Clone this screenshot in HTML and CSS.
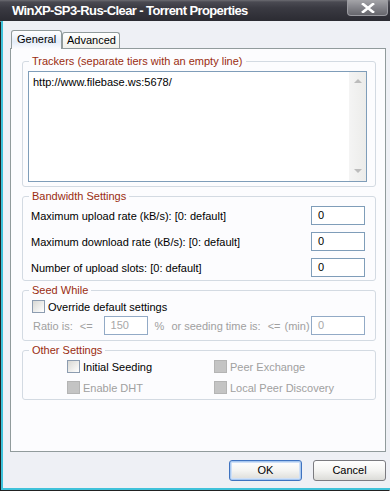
FILE: index.html
```html
<!DOCTYPE html>
<html>
<head>
<meta charset="utf-8">
<link rel="stylesheet" href="styles.css">
</head>
<body>
<div class="frame">
  <div class="titlebar">
    <span class="title">WinXP-SP3-Rus-Clear - Torrent Properties</span>
    <div class="close">
      <svg width="16" height="10" viewBox="0 0 16 10"><path d="M3 1 L13 9 M13 1 L3 9" stroke="#fff" stroke-width="2.6" stroke-linecap="square"/></svg>
    </div>
  </div>
  <div class="body">
    <div class="tabs">
      <div class="tab active">General</div>
      <div class="tab">Advanced</div>
    </div>
    <div class="panel">
      <fieldset class="group">
        <legend>Trackers (separate tiers with an empty line)</legend>
        <div class="trackers">
          <div class="tracker-box">
            <div class="tracker-text">http://www.filebase.ws:5678/</div>
            <div class="vscroll"><span class="arr up"></span><span class="arr down"></span></div>
          </div>
        </div>
      </fieldset>
      <fieldset class="group spaced">
        <legend>Bandwidth Settings</legend>
        <div class="bandwidth">
          <div class="brow"><span>Maximum upload rate (kB/s): [0: default]</span><div class="field">0</div></div>
          <div class="brow"><span>Maximum download rate (kB/s): [0: default]</span><div class="field">0</div></div>
          <div class="brow"><span>Number of upload slots: [0: default]</span><div class="field">0</div></div>
        </div>
      </fieldset>
      <fieldset class="group spaced">
        <legend>Seed While</legend>
        <div class="seed">
          <div class="check-row"><span class="cb"></span><span>Override default settings</span></div>
          <div class="ratio-row">
            <span>Ratio is:</span><span class="le">&lt;=</span>
            <div class="field dis small">150</div>
            <span class="pct">%</span>
            <span class="or">or seeding time is:</span><span class="le2">&lt;=</span><span class="min">(min)</span>
            <div class="field dis last">0</div>
          </div>
        </div>
      </fieldset>
      <fieldset class="group spaced">
        <legend>Other Settings</legend>
        <div class="other">
          <div class="check-row"><span class="cb"></span><span>Initial Seeding</span></div>
          <div class="check-row off"><span class="cb dis"></span><span>Peer Exchange</span></div>
          <div class="check-row off"><span class="cb dis"></span><span>Enable DHT</span></div>
          <div class="check-row off"><span class="cb dis"></span><span>Local Peer Discovery</span></div>
        </div>
      </fieldset>
    </div>
    <div class="buttons">
      <div class="btn default">OK</div>
      <div class="btn">Cancel</div>
    </div>
  </div>
</div>
</body>
</html>
```
FILE: styles.css
```css
* { box-sizing: border-box; }
html, body { margin: 0; padding: 0; }
body {
  width: 390px;
  height: 491px;
  overflow: hidden;
  background: #8a8a8a;
  font-family: "Liberation Sans", Arial, sans-serif;
  font-size: 11px;
  color: #000;
}
.frame {
  width: 390px;
  height: 491px;
  display: flex;
  flex-direction: column;
}
.titlebar {
  height: 21px;
  flex: none;
  display: flex;
  align-items: flex-start;
  background: linear-gradient(#6c6c72 0, #4a4a52 2px, #3a3a42 8px, #2b2b32 100%);
  padding-left: 12px;
  padding-right: 2px;
}
.title {
  color: #fff;
  font-weight: bold;
  font-size: 13px;
  letter-spacing: -0.6px;
  line-height: 16px;
  padding-top: 3px;
}
.close {
  margin-left: auto;
  width: 41px;
  height: 16px;
  border: 1px solid #9a9aa0;
  border-top: none;
  border-radius: 0 0 4px 4px;
  background: linear-gradient(#a4a4a8 0, #8a8a90 40%, #66666c 100%);
  display: flex;
  align-items: center;
  justify-content: center;
}
.close svg { display: block; }
.body {
  flex: 1;
  margin-left: 1px;
  margin-bottom: 1px;
  border-left: 2px solid #3fc2da;
  border-bottom: 2px solid #3fc2da;
  box-shadow: -1px 1px 0 #222;
  background: #eef0f5;
  display: flex;
  flex-direction: column;
  padding-top: 9px;
}
.tabs {
  height: 18px;
  display: flex;
  align-items: flex-end;
  padding-left: 8px;
  position: relative;
  z-index: 2;
}
.tab {
  height: 16px;
  line-height: 15px;
  padding: 0 4px;
  width: 58px;
  border: 1px solid #919b9c;
  border-bottom: none;
  border-radius: 3px 3px 0 0;
  background: linear-gradient(#ffffff, #f0f0ea);
  color: #000;
  font-size: 11px;
  white-space: nowrap;
}
.tab.active {
  width: 51px;
  height: 19px;
  margin-bottom: -1px;
  padding-left: 5px;
  line-height: 17px;
  background: linear-gradient(#ffffff 0, #e3ecf8 60%, #fcfcfe 100%);
}
.panel {
  height: 404px;
  margin-left: 7px;
  margin-right: 4px;
  border: 1px solid #919b9c;
  background: #fcfcfe;
  padding: 6px 9px 0 11px;
}
.group {
  margin: 0;
  padding: 0;
  min-width: 0;
  border: 1px solid #d3dae2;
  border-radius: 3px;
}
.group.spaced { margin-top: 3px; }
.group legend {
  padding: 0 3px;
  margin-left: 6px;
  line-height: 13px;
  font-size: 11px;
  color: #9a2c10;
}
.trackers { padding: 3px 8px 4px 5px; }
.tracker-box {
  height: 111px;
  border: 1px solid #7f9db9;
  background: #fff;
  display: flex;
}
.tracker-text {
  flex: 1;
  padding: 4px 4px;
  line-height: 13px;
}
.vscroll {
  width: 17px;
  background: linear-gradient(to right, #f4f4f4, #ececea);
  display: flex;
  flex-direction: column;
  justify-content: space-between;
  align-items: center;
  padding: 7px 0 8px;
}
.arr { width: 0; height: 0; border-left: 4px solid transparent; border-right: 4px solid transparent; }
.arr.up { border-bottom: 4px solid #bcbcbc; }
.arr.down { border-top: 4px solid #bcbcbc; }
.bandwidth {
  padding: 3px 10px 3px 8px;
  display: flex;
  flex-direction: column;
  gap: 7px;
}
.brow {
  height: 19px;
  display: flex;
  align-items: center;
  justify-content: space-between;
}
.field {
  width: 54px;
  height: 19px;
  border: 1px solid #7f9db9;
  background: #fff;
  padding-left: 6px;
  line-height: 17px;
  flex: none;
}
.field.dis { color: #a8a8a8; border-color: #92aac6; }
.field.small { width: 44px; margin-left: 11px; }
.field.last { margin-left: auto; }
.seed {
  padding: 2px 10px 5px 9px;
}
.check-row {
  height: 15px;
  display: flex;
  align-items: center;
  gap: 3px;
  white-space: nowrap;
}
.check-row.off { color: #a0a0a0; }
.cb {
  width: 13px;
  height: 13px;
  flex: none;
  border: 1px solid #8c9cb0;
  background: linear-gradient(135deg, #d8d8d4, #ffffff);
}
.cb.dis {
  border-color: #b4b4b4;
  background: #c4c4c4;
}
.ratio-row {
  margin-top: 2px;
  height: 19px;
  display: flex;
  align-items: center;
  padding-left: 1px;
  color: #a0a0a0;
  white-space: nowrap;
}
.le { margin-left: 7px; }
.pct { margin-left: 7px; }
.or { margin-left: 7px; }
.le2 { margin-left: 7px; }
.min { margin-left: 4px; }
.other {
  padding: 2px 0 4px 44px;
  display: grid;
  grid-template-columns: 147px auto;
  row-gap: 6px;
}
.buttons {
  margin-top: 8px;
  padding-right: 4px;
  display: flex;
  justify-content: flex-end;
  gap: 11px;
}
.btn {
  width: 73px;
  height: 21px;
  border: 1px solid #7b7b80;
  border-radius: 3px;
  background: linear-gradient(#ffffff 0, #f4f4f2 50%, #dcdcd8 100%);
  text-align: center;
  line-height: 19px;
  font-size: 11px;
  color: #000;
}
.btn.default {
  border-color: #3f73c0;
  box-shadow: inset 0 0 0 1px #a8c8f0, inset 0 0 0 2px #cfe0f7;
}
```
